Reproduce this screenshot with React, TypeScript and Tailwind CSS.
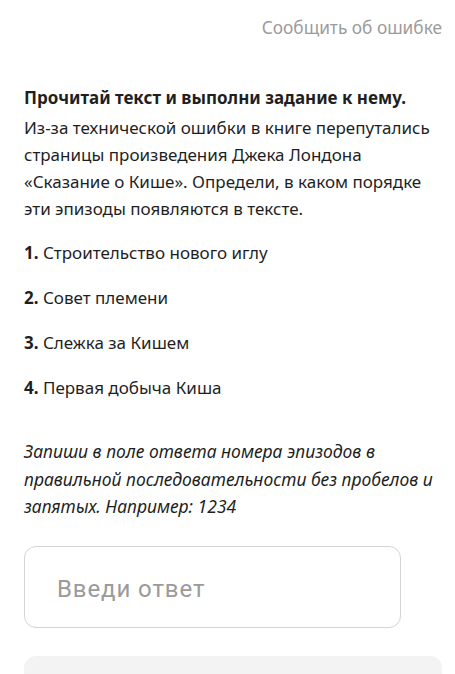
import React, { useState } from 'react';

const episodes = [
  'Строительство нового иглу',
  'Совет племени',
  'Слежка за Кишем',
  'Первая добыча Киша',
];

export default function App() {
  const [answer, setAnswer] = useState('');

  return (
    <div className="min-h-screen bg-white pl-6 pr-[13px] font-['Noto_Sans',sans-serif] text-[17px] leading-[26px] text-[#1f1f1f]">
      <div className="flex justify-end pt-[15px]">
        <button className="text-[17.3px] text-[#9b9b9b]">Сообщить об ошибке</button>
      </div>

      <h1 className="mt-11 font-bold">Прочитай текст и выполни задание к нему.</h1>

      <p className="mt-[3px] leading-[27px]">
        Из-за технической ошибки в книге перепутались
        <br />
        страницы произведения Джека Лондона
        <br />
        «Сказание о Кише». Определи, в каком порядке
        <br />
        эти эпизоды появляются в тексте.
      </p>

      <ol className="mt-[18px] flex flex-col gap-[19px]">
        {episodes.map((item, i) => (
          <li key={i}>
            <span className="font-bold">{i + 1}.</span> {item}
          </li>
        ))}
      </ol>

      <p className="mt-[37px] text-[17.5px] leading-[27.5px] italic">
        Запиши в поле ответа номера эпизодов в
        <br />
        правильной последовательности без пробелов и
        <br />
        запятых. Например: 1234
      </p>

      <input
        value={answer}
        onChange={(e) => setAnswer(e.target.value)}
        placeholder="Введи ответ"
        className="mt-[25px] block h-[82px] w-[377px] rounded-[12px] border border-[#d4d4d4] px-8 pt-1 font-['Roboto',sans-serif] text-[24px] tracking-[0.9px] text-[#1f1f1f] placeholder:text-[#9a9a9a] focus:outline-none"
      />

      <div className="mt-[28px] h-[120px] rounded-[12px] bg-[#f3f3f3]" />
    </div>
  );
}
